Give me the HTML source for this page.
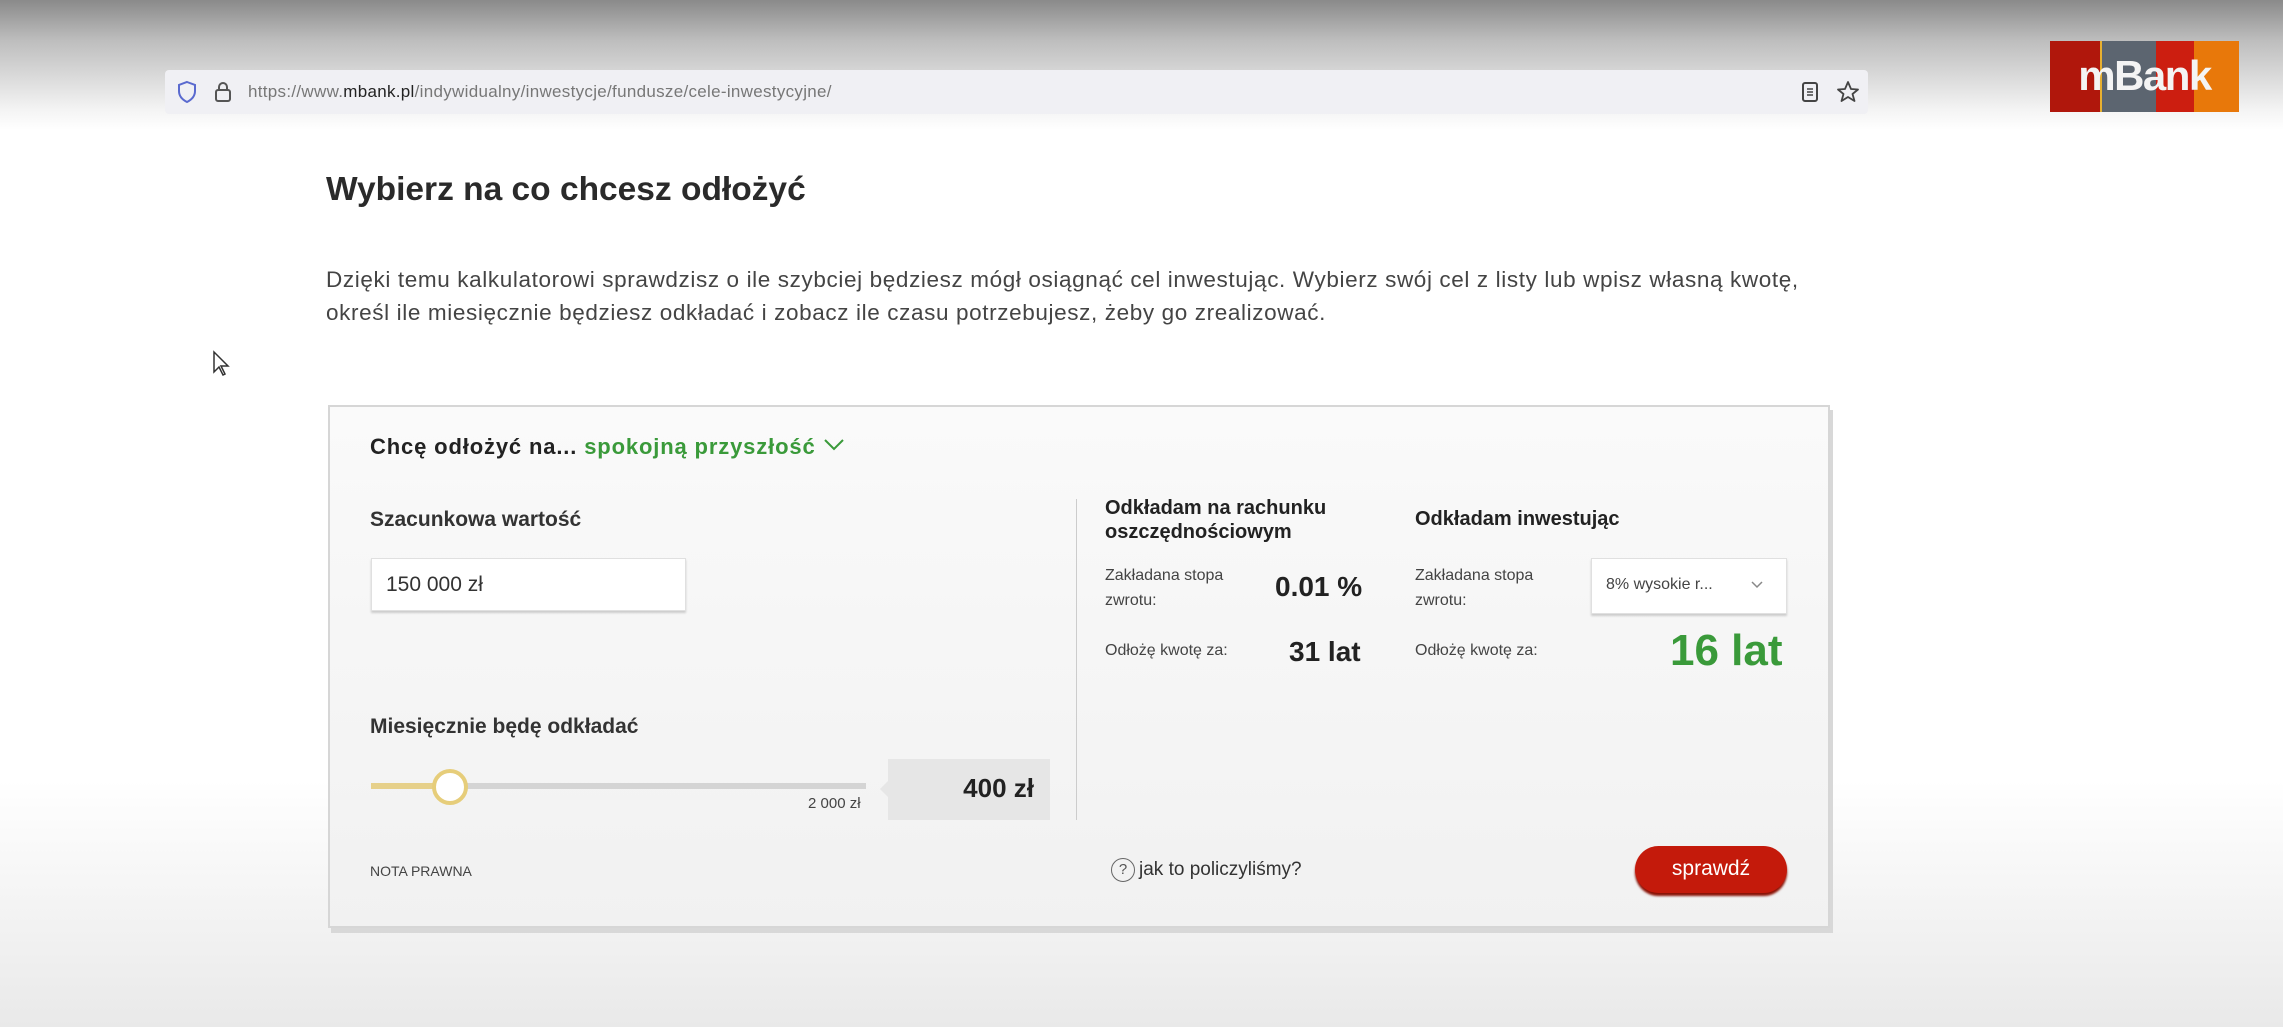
<!DOCTYPE html>
<html><head><meta charset="utf-8"><style>
*{margin:0;padding:0;box-sizing:border-box}
body{width:2283px;height:1027px;overflow:hidden;position:relative;font-family:"Liberation Sans",sans-serif;color:#222;
background:linear-gradient(#8a8a8a 0px,#bdbdbd 40px,#f4f4f4 110px,#fff 130px,#fff 780px,#e9e9e9 1027px)}
.a{position:absolute;white-space:nowrap}
.url{left:165px;top:70px;width:1703px;height:44px;background:#f0f0f4;border-radius:4px}
.card{left:328px;top:405px;width:1502px;height:523px;background:linear-gradient(#fafafa,#f1f1f1);border:2px solid #d6d6d6;box-shadow:3px 5px 0 #d8d8d8}
.b{font-weight:bold}
.g{color:#3a9a3a}
</style></head><body>
<div class="a url"></div>
<svg class="a" style="left:176px;top:80px" width="22" height="24" viewBox="0 0 22 24"><path d="M11 2 L19 5 V11 C19 17 15 20 11 22 C7 20 3 17 3 11 V5 Z" fill="none" stroke="#5a6acf" stroke-width="2"/></svg>
<svg class="a" style="left:213px;top:80px" width="20" height="24" viewBox="0 0 20 24"><rect x="3" y="10" width="14" height="11" rx="2" fill="none" stroke="#555" stroke-width="2"/><path d="M6 10 V7 a4 4 0 0 1 8 0 V10" fill="none" stroke="#555" stroke-width="2"/></svg>
<div class="a" style="left:248px;top:82px;font-size:17px;color:#777;letter-spacing:0.3px">https://www.<span style="color:#222">mbank.pl</span>/indywidualny/inwestycje/fundusze/cele-inwestycyjne/</div>
<svg class="a" style="left:1801px;top:81px" width="18" height="22" viewBox="0 0 18 22"><rect x="2" y="2" width="14" height="18" rx="2" fill="none" stroke="#444" stroke-width="2"/><path d="M6 8h6M6 11h6M6 14h6" stroke="#444" stroke-width="1.5"/></svg>
<svg class="a" style="left:1836px;top:80px" width="24" height="24" viewBox="0 0 24 24"><path d="M12 2 L15 9 L22 9.5 L16.5 14 L18.5 21 L12 17 L5.5 21 L7.5 14 L2 9.5 L9 9 Z" fill="none" stroke="#444" stroke-width="1.8" stroke-linejoin="round"/></svg>
<div class="a" style="left:2050px;top:41px;width:189px;height:71px;display:flex">
<div style="width:50px;background:#b0170c"></div><div style="width:56px;background:#5c6570;border-left:2px solid #e8b030"></div><div style="width:38px;background:#cc1e10"></div><div style="width:45px;background:#e8780a"></div></div>
<div class="a b" style="left:2050px;top:52px;width:189px;text-align:center;color:#f4f4f4;font-size:42px;letter-spacing:-1.5px">mBank</div>

<div class="a" style="left:326px;top:171px;font-size:33.5px;font-weight:bold;color:#2a2a2a">Wybierz na co chcesz odłożyć</div>
<div class="a" style="left:326px;top:267px;font-size:22.5px;color:#444;letter-spacing:0.62px">Dzięki temu kalkulatorowi sprawdzisz o ile szybciej będziesz mógł osiągnąć cel inwestując. Wybierz swój cel z listy lub wpisz własną kwotę,</div>
<div class="a" style="left:326px;top:300px;font-size:22.5px;color:#444;letter-spacing:0.62px">określ ile miesięcznie będziesz odkładać i zobacz ile czasu potrzebujesz, żeby go zrealizować.</div>
<svg class="a" style="left:212px;top:350px" width="18" height="28" viewBox="0 0 18 28"><path d="M2 2 V22 L7 17 L11 25 L13 24 L9 16 L16 16 Z" fill="#fff" stroke="#333" stroke-width="1.5"/></svg>

<div class="a card"></div>
<div class="a b" style="left:370px;top:434px;font-size:22px;color:#222;letter-spacing:0.85px">Chcę odłożyć na... <span class="g">spokojną przyszłość</span></div>
<svg class="a" style="left:823px;top:437px" width="22" height="16"><path d="M2 3 L11 12 L20 3" fill="none" stroke="#3a9a3a" stroke-width="2"/></svg>
<div class="a" style="left:370px;top:508px;font-size:21px;font-weight:bold;color:#333">Szacunkowa wartość</div>
<div class="a" style="left:371px;top:558px;width:315px;height:53px;background:#fff;border:1px solid #e0e0e0;box-shadow:0 2px 2px #ccc"></div>
<div class="a" style="left:386px;top:573px;font-size:21px;color:#333">150 000 zł</div>
<div class="a" style="left:370px;top:715px;font-size:21px;font-weight:bold;color:#333">Miesięcznie będę odkładać</div>
<div class="a" style="left:371px;top:783px;width:495px;height:6px;background:#d4d4d4"></div>
<div class="a" style="left:371px;top:783px;width:80px;height:6px;background:#e6d08a"></div>
<div class="a" style="left:432px;top:769px;width:36px;height:36px;border-radius:50%;background:#fff;border:4px solid #e6cd7a"></div>
<div class="a" style="left:808px;top:795px;font-size:15px;color:#444">2 000 zł</div>
<div class="a" style="left:888px;top:759px;width:162px;height:61px;background:#e6e6e6"></div>
<div class="a" style="left:880px;top:780px;width:0;height:0;border-top:9px solid transparent;border-bottom:9px solid transparent;border-right:9px solid #e6e6e6"></div>
<div class="a b" style="left:888px;top:773px;width:146px;text-align:right;font-size:26px;color:#222">400 zł</div>
<div class="a" style="left:1076px;top:499px;width:1px;height:321px;background:#ccc"></div>

<div class="a b" style="left:1105px;top:496px;font-size:20px;color:#222;line-height:24px">Odkładam na rachunku<br>oszczędnościowym</div>
<div class="a b" style="left:1415px;top:508px;font-size:20px;color:#222">Odkładam inwestując</div>
<div class="a" style="left:1105px;top:563px;font-size:16px;color:#444;line-height:25px">Zakładana stopa<br>zwrotu:</div>
<div class="a b" style="left:1275px;top:571px;font-size:28px;color:#222">0.01 %</div>
<div class="a" style="left:1415px;top:563px;font-size:16px;color:#444;line-height:25px">Zakładana stopa<br>zwrotu:</div>
<div class="a" style="left:1591px;top:558px;width:196px;height:56px;background:#fff;border:1px solid #e0e0e0;box-shadow:0 2px 2px #ccc"></div>
<div class="a" style="left:1606px;top:576px;font-size:16px;color:#444">8% wysokie r...</div>
<svg class="a" style="left:1750px;top:580px" width="14" height="10"><path d="M2 2 L7 7 L12 2" fill="none" stroke="#888" stroke-width="1.5"/></svg>
<div class="a" style="left:1105px;top:642px;font-size:16px;color:#444">Odłożę kwotę za:</div>
<div class="a b" style="left:1289px;top:636px;font-size:28px;color:#222">31 lat</div>
<div class="a" style="left:1415px;top:642px;font-size:16px;color:#444">Odłożę kwotę za:</div>
<div class="a b g" style="left:1670px;top:626px;font-size:44px">16 lat</div>

<div class="a" style="left:370px;top:863px;font-size:14px;color:#444">NOTA PRAWNA</div>
<div class="a" style="left:1111px;top:858px;width:24px;height:24px;border:1.5px solid #666;border-radius:50%;font-size:15px;text-align:center;line-height:21px;color:#555">?</div>
<div class="a" style="left:1139px;top:859px;font-size:19px;color:#333">jak to policzyliśmy?</div>
<div class="a" style="left:1635px;top:846px;width:152px;height:47px;border-radius:24px;background:#c41a0b;box-shadow:0 3px 2px #8a1206;color:#fff;font-size:21px;text-align:center;line-height:45px">sprawdź</div>
</body></html>
